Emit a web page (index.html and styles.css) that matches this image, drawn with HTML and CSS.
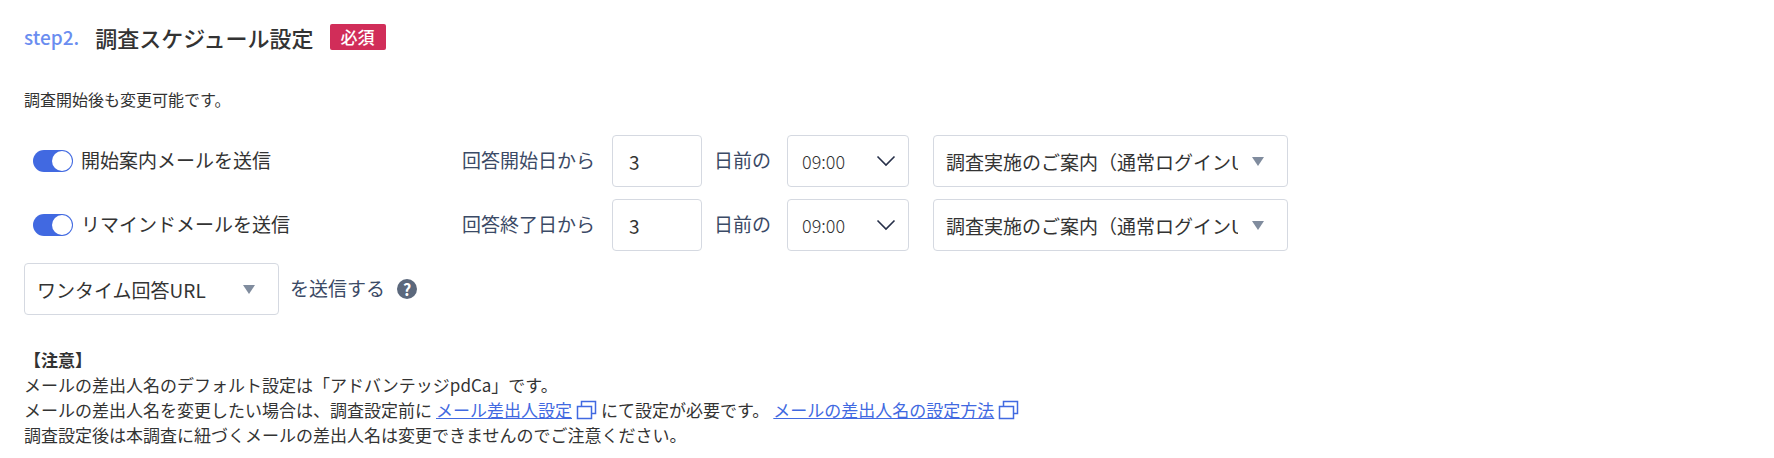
FILE: index.html
```html
<!DOCTYPE html>
<html lang="ja">
<head>
    <meta charset="UTF-8">
    <meta name="viewport" content="width=device-width, initial-scale=1.0">
    <title>調査スケジュール設定</title>
    <link rel="stylesheet" href="styles.css">
</head>
<body>
    <main class="schedule">
        <h2 class="title">
            <span class="step">step2.</span>
            <span>調査スケジュール設定</span>
            <span class="required">必須</span>
        </h2>
        <p class="lead">調査開始後も変更可能です。</p>

        <form class="mail-form">
            <div class="mail-row">
                <label class="switch-label">
                    <input type="checkbox" class="switch" checked>
                    <span>開始案内メールを送信</span>
                </label>
                <label class="day-label" for="start-days">回答開始日から</label>
                <input type="text" class="control days" id="start-days" value="3">
                <label class="before-label" for="start-time">日前の</label>
                <select class="control time" id="start-time">
                    <option>09:00</option>
                </select>
                <select class="control template" aria-label="開始案内メールのテンプレート">
                    <option>調査実施のご案内（通常ログインURL）</option>
                </select>
            </div>

            <div class="mail-row">
                <label class="switch-label">
                    <input type="checkbox" class="switch" checked>
                    <span>リマインドメールを送信</span>
                </label>
                <label class="day-label" for="end-days">回答終了日から</label>
                <input type="text" class="control days" id="end-days" value="3">
                <label class="before-label" for="end-time">日前の</label>
                <select class="control time" id="end-time">
                    <option>09:00</option>
                </select>
                <select class="control template" aria-label="リマインドメールのテンプレート">
                    <option>調査実施のご案内（通常ログインURL）</option>
                </select>
            </div>

            <div class="mail-row">
                <select class="control url-type" id="url-type">
                    <option>ワンタイム回答URL</option>
                </select>
                <label class="send-label" for="url-type">を送信する</label>
                <button type="button" class="help">?</button>
            </div>
        </form>

        <section class="notes">
            <h3>【注意】</h3>
            <p>メールの差出人名のデフォルト設定は「アドバンテッジpdCa」です。</p>
            <p class="links">
                <span>メールの差出人名を変更したい場合は、調査設定前に</span>
                <a href="#"><span>メール差出人設定</span><svg class="window" viewBox="0 0 21 20"><path d="M5.5 6V1.5h14v12H16M1.5 6.5h14v12h-14z"/></svg></a>
                <span>にて設定が必要です。</span>
                <a href="#"><span>メールの差出人名の設定方法</span><svg class="window" viewBox="0 0 21 20"><path d="M5.5 6V1.5h14v12H16M1.5 6.5h14v12h-14z"/></svg></a>
            </p>
            <p>調査設定後は本調査に紐づくメールの差出人名は変更できませんのでご注意ください。</p>
        </section>
    </main>
</body>
</html>
```

FILE: styles.css
```css
* {
    box-sizing: border-box;
}
body {
    margin: 0;
    font-family: "Noto Sans CJK JP", sans-serif;
    font-size: 19px;
    color: #333;
    background-color: #fff;
}
.schedule {
    padding: 24px;
}
.title {
    display: flex;
    align-items: center;
    gap: 16px;
    margin: 0;
    font-size: 22px;
    font-weight: 500;
    line-height: 26px;
}
.step {
    font-size: 19px;
    color: #6a8df0;
}
.required {
    padding: 0 11px;
    border-radius: 2px;
    background-color: #d12d59;
    color: #fff;
    font-size: 17px;
    line-height: 26px;
}
.lead {
    margin: 37px 0 23px;
    font-size: 16px;
    line-height: 25px;
}
.mail-form {
    display: flex;
    flex-direction: column;
    gap: 12px;
}
.mail-row {
    display: flex;
    align-items: center;
}
.switch-label {
    display: flex;
    align-items: center;
    gap: 8px;
    width: 438px;
    padding-left: 9px;
}
.switch {
    appearance: none;
    display: flex;
    justify-content: flex-end;
    width: 40px;
    height: 22px;
    margin: 0;
    padding: 1px;
    border-radius: 11px;
    background-color: #4169e1;
}
.switch::before {
    content: "";
    width: 20px;
    height: 20px;
    border-radius: 50%;
    background-color: #fff;
}
.switch-label span,
.day-label,
.before-label,
.send-label {
    padding-bottom: 3px;
}
.day-label,
.before-label,
.send-label {
    color: #3b4a66;
}
.day-label {
    width: 150px;
}
.before-label {
    width: 73px;
}
.control {
    appearance: none;
    height: 52px;
    border: 1px solid #d5d9e1;
    border-radius: 4px;
    background-color: #fff;
    background-repeat: no-repeat;
    color: #333;
    font-family: inherit;
    font-size: 19px;
}
.days {
    width: 90px;
    margin-right: 12px;
    padding: 0 16px;
}
.time {
    width: 122px;
    margin-right: 24px;
    padding: 0 14px;
    background-image: url("data:image/svg+xml,%3Csvg xmlns='http://www.w3.org/2000/svg' width='20' height='12'%3E%3Cpath d='M1.5 1.5l8.5 8.5 8.5-8.5' fill='none' stroke='%23273049' stroke-width='1.6'/%3E%3C/svg%3E");
    background-position: right 12px center;
    font-size: 18px;
    font-weight: 300;
}
.template,
.url-type {
    padding: 0 49px 0 12px;
    background-image: url("data:image/svg+xml,%3Csvg xmlns='http://www.w3.org/2000/svg' width='12' height='9'%3E%3Cpath d='M0 0h12L6 9z' fill='%23808c9e'/%3E%3C/svg%3E");
    background-position: right 23px center;
}
.template {
    width: 355px;
}
.url-type {
    width: 255px;
    margin-right: 11px;
}
.help {
    width: 20px;
    height: 20px;
    margin-left: 12px;
    padding: 0;
    border: none;
    border-radius: 50%;
    background-color: #5b687c;
    color: #fff;
    font-family: inherit;
    font-size: 16px;
    font-weight: bold;
    line-height: 20px;
    cursor: pointer;
}
.notes {
    margin-top: 32px;
    line-height: 25px;
}
.notes h3,
.notes p {
    margin: 0;
    font-size: 17px;
}
.links {
    display: flex;
    flex-wrap: wrap;
    gap: 4px;
}
.links a {
    display: flex;
    align-items: center;
    gap: 4px;
    color: #4169e1;
    text-decoration: none;
}
.links a span {
    text-decoration: underline;
}
.window {
    width: 21px;
    height: 20px;
    fill: none;
    stroke: #4169e1;
    stroke-width: 1.5;
}
```
